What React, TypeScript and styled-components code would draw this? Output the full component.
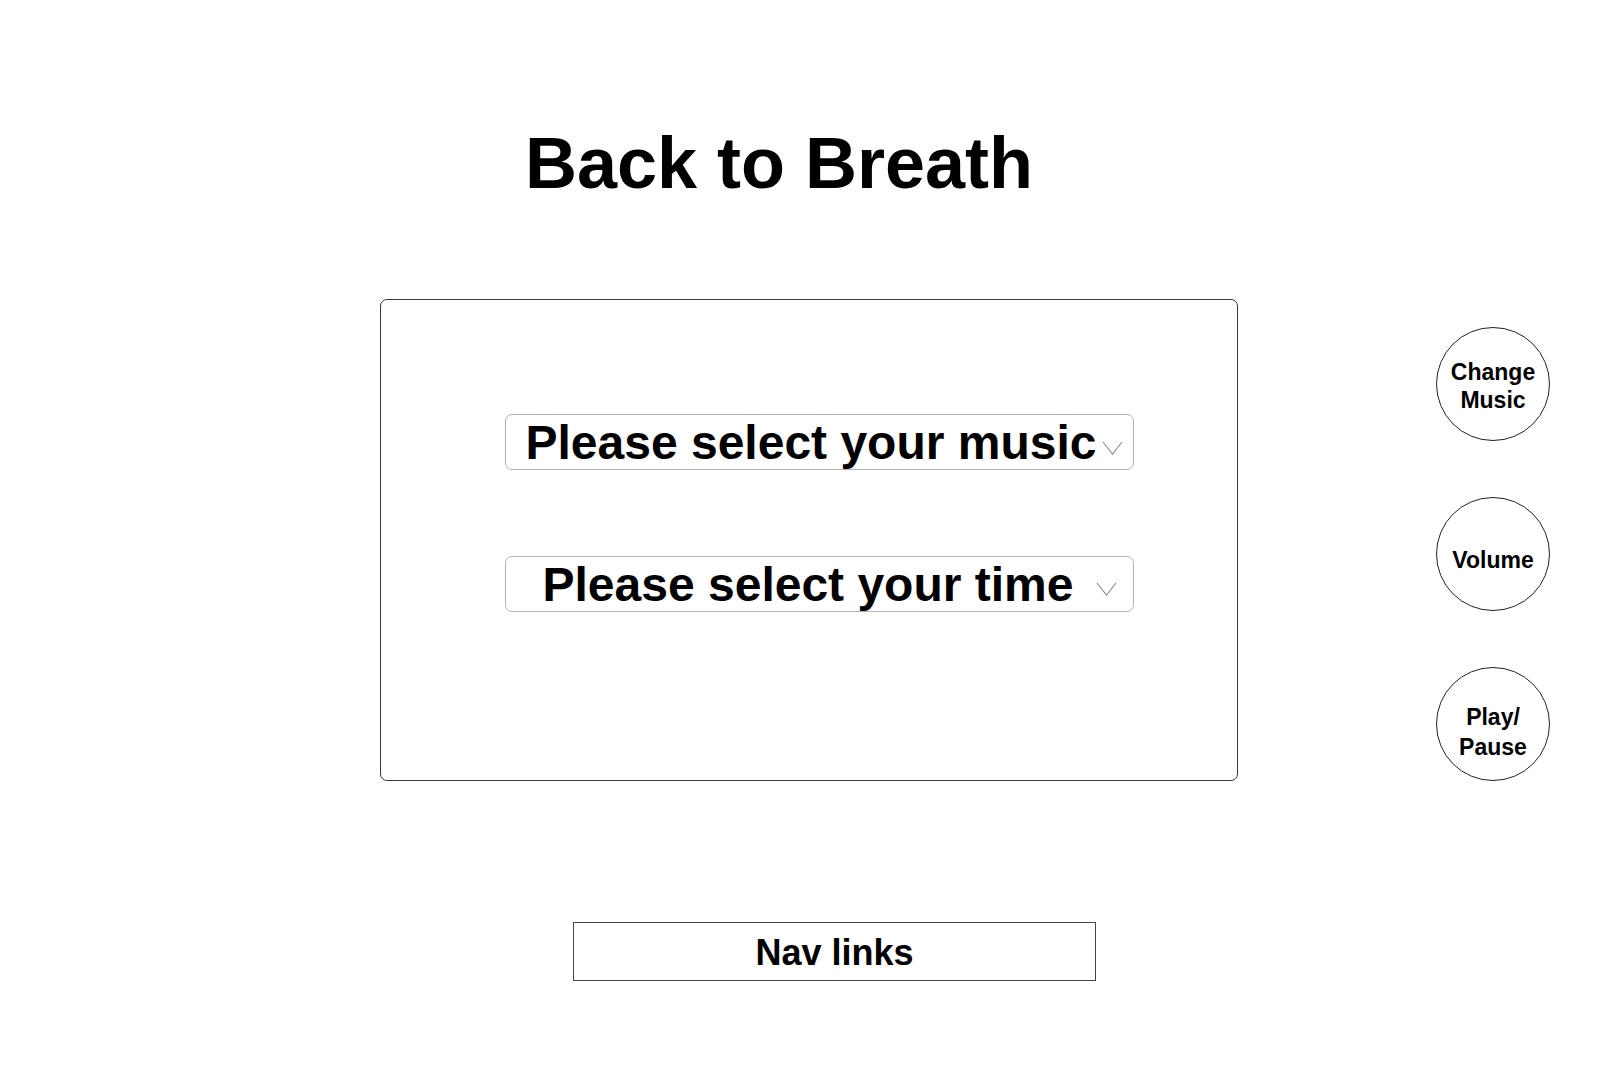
import React from "react";
import styled, { createGlobalStyle } from "styled-components";

const GlobalStyle = createGlobalStyle`
  html, body {
    margin: 0;
    padding: 0;
    background: #ffffff;
  }
  body {
    font-family: "Liberation Sans", Arial, Helvetica, sans-serif;
    color: #000;
  }
`;

const Page = styled.div`
  width: 1618px;
  min-height: 1080px;
  padding-top: 122px;
  box-sizing: border-box;
`;

const Title = styled.h1`
  margin: 0;
  padding-right: 60px;
  text-align: center;
  font-size: 72px;
  line-height: 82px;
  font-weight: 700;
`;

const MainRow = styled.div`
  display: flex;
  align-items: flex-end;
  margin-top: 95px;
  padding-left: 380px;
`;

const Card = styled.section`
  width: 858px;
  height: 482px;
  box-sizing: border-box;
  border: 1px solid #3a3a3a;
  border-radius: 7px;
  padding: 114px 103px 0 124px;
  display: flex;
  flex-direction: column;
  gap: 86px;
`;

const Select = styled.div<{ $arrowRight: number }>`
  height: 56px;
  box-sizing: border-box;
  border: 1px solid #b4b4b4;
  border-radius: 7px;
  display: flex;
  align-items: center;
  padding: 1px ${(p) => p.$arrowRight}px 0 18px;
`;

const SelectLabel = styled.span`
  flex: 1;
  text-align: center;
  font-size: 48px;
  font-weight: 700;
  line-height: 54px;
  white-space: nowrap;
`;

const Chevron = styled.svg<{ $drop: number }>`
  width: 21px;
  height: 14px;
  flex: none;
  margin-left: 4px;
  margin-top: ${(p) => p.$drop}px;
`;

const Controls = styled.div`
  display: flex;
  flex-direction: column;
  gap: 56px;
  margin-left: 198px;
`;

const RoundButton = styled.button<{ $shift: number; $lh: number }>`
  width: 114px;
  height: 114px;
  box-sizing: border-box;
  border: 1px solid #222;
  border-radius: 50%;
  background: #fff;
  padding: ${(p) => p.$shift}px 0 0 0;
  font-family: "Liberation Sans", Arial, Helvetica, sans-serif;
  font-size: 23px;
  font-weight: 700;
  line-height: ${(p) => p.$lh}px;
  color: #000;
  text-align: center;
  cursor: pointer;
`;

const NavBar = styled.nav`
  margin-top: 141px;
  margin-left: 573px;
  width: 523px;
  height: 59px;
  box-sizing: border-box;
  border: 1px solid #444;
  display: flex;
  align-items: center;
  justify-content: center;
  font-size: 36px;
  font-weight: 700;
  padding-top: 3px;
`;

const ChevronIcon: React.FC<{ drop: number }> = ({ drop }) => (
  <Chevron $drop={drop} viewBox="0 0 21 14" fill="none">
    <path d="M1 1 L10.5 13 L20 1" stroke="#8c8c8c" strokeWidth="1.1" />
  </Chevron>
);

export default function App() {
  return (
    <>
      <GlobalStyle />
      <Page>
        <Title>Back to Breath</Title>
        <MainRow>
          <Card>
            <Select $arrowRight={10}>
              <SelectLabel>Please select your music</SelectLabel>
              <ChevronIcon drop={10} />
            </Select>
            <Select $arrowRight={16}>
              <SelectLabel>Please select your time</SelectLabel>
              <ChevronIcon drop={8} />
            </Select>
          </Card>
          <Controls>
            <RoundButton $shift={3} $lh={28}>
              Change
              <br />
              Music
            </RoundButton>
            <RoundButton $shift={11} $lh={28}>
              Volume
            </RoundButton>
            <RoundButton $shift={16} $lh={30}>
              Play/
              <br />
              Pause
            </RoundButton>
          </Controls>
        </MainRow>
        <NavBar>Nav links</NavBar>
      </Page>
    </>
  );
}
